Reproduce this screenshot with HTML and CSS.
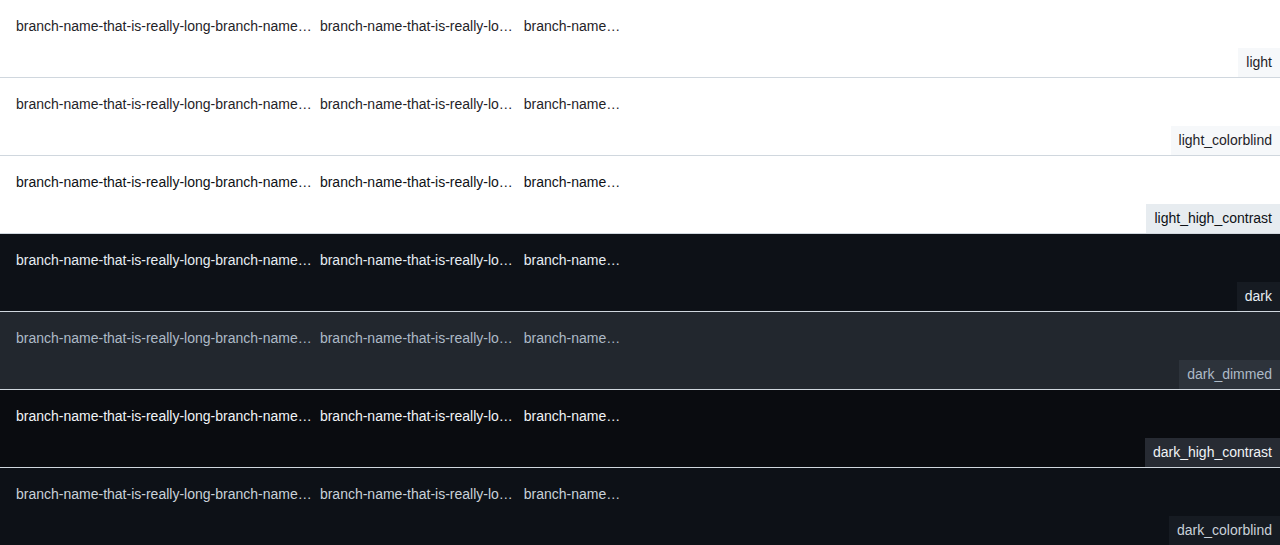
FILE: index.html
```html
<!DOCTYPE html>
<html>
<head>
<meta charset="utf-8">
<link rel="stylesheet" href="styles.css">
</head>
<body>
<div class="theme t-light">
  <div class="content"><span class="trunc w300">branch-name-that-is-really-long-branch-name-that-is-really-long</span> <span class="trunc w200">branch-name-that-is-really-long-branch-name-that-is-really-long</span> <span class="trunc w100">branch-name-that-is-really-long-branch-name-that-is-really-long</span></div>
  <div class="label">light</div>
</div>
<div class="theme t-light">
  <div class="content"><span class="trunc w300">branch-name-that-is-really-long-branch-name-that-is-really-long</span> <span class="trunc w200">branch-name-that-is-really-long-branch-name-that-is-really-long</span> <span class="trunc w100">branch-name-that-is-really-long-branch-name-that-is-really-long</span></div>
  <div class="label">light_colorblind</div>
</div>
<div class="theme t-lhc">
  <div class="content"><span class="trunc w300">branch-name-that-is-really-long-branch-name-that-is-really-long</span> <span class="trunc w200">branch-name-that-is-really-long-branch-name-that-is-really-long</span> <span class="trunc w100">branch-name-that-is-really-long-branch-name-that-is-really-long</span></div>
  <div class="label">light_high_contrast</div>
</div>
<div class="theme t-dark">
  <div class="content"><span class="trunc w300">branch-name-that-is-really-long-branch-name-that-is-really-long</span> <span class="trunc w200">branch-name-that-is-really-long-branch-name-that-is-really-long</span> <span class="trunc w100">branch-name-that-is-really-long-branch-name-that-is-really-long</span></div>
  <div class="label">dark</div>
</div>
<div class="theme t-dimmed">
  <div class="content"><span class="trunc w300">branch-name-that-is-really-long-branch-name-that-is-really-long</span> <span class="trunc w200">branch-name-that-is-really-long-branch-name-that-is-really-long</span> <span class="trunc w100">branch-name-that-is-really-long-branch-name-that-is-really-long</span></div>
  <div class="label">dark_dimmed</div>
</div>
<div class="theme t-dhc">
  <div class="content"><span class="trunc w300">branch-name-that-is-really-long-branch-name-that-is-really-long</span> <span class="trunc w200">branch-name-that-is-really-long-branch-name-that-is-really-long</span> <span class="trunc w100">branch-name-that-is-really-long-branch-name-that-is-really-long</span></div>
  <div class="label">dark_high_contrast</div>
</div>
<div class="theme t-dcb">
  <div class="content"><span class="trunc w300">branch-name-that-is-really-long-branch-name-that-is-really-long</span> <span class="trunc w200">branch-name-that-is-really-long-branch-name-that-is-really-long</span> <span class="trunc w100">branch-name-that-is-really-long-branch-name-that-is-really-long</span></div>
  <div class="label">dark_colorblind</div>
</div>
</body>
</html>
```
FILE: styles.css
```css
html, body {
  margin: 0;
  padding: 0;
}
body {
  font-family: "Liberation Sans", Arial, sans-serif;
  font-size: 14px;
  line-height: 20px;
  background: #0d1117;
}
.theme {
  display: flex;
  flex-direction: column;
  border-bottom: 1px solid #d0d7de;
  height: 77px;
}
.content {
  padding: 16px 16px 12px;
  white-space: nowrap;
  height: 20px;
}
.trunc {
  display: inline-block;
  overflow: hidden;
  text-overflow: ellipsis;
  white-space: nowrap;
  vertical-align: top;
}
.w300 { max-width: 300px; }
.w200 { max-width: 200px; }
.w100 { max-width: 100px; }
.label {
  align-self: flex-end;
  padding: 4px 8px;
  line-height: 21px;
}
.t-light { background: #ffffff; color: #1f2328; }
.t-light .label { background: #f6f8fa; }
.t-lhc { background: #ffffff; color: #0e1116; }
.t-lhc .label { background: #e7ecf0; }
.t-dark { background: #0d1117; color: #e6edf3; }
.t-dark .label { background: #161b22; }
.t-dimmed { background: #22272e; color: #adbac7; }
.t-dimmed .label { background: #2d333b; }
.t-dhc { background: #0a0c10; color: #f0f3f6; }
.t-dhc .label { background: #272b33; }
.t-dcb { background: #0d1117; color: #c9d1d9; }
.t-dcb .label { background: #161b22; }
```
